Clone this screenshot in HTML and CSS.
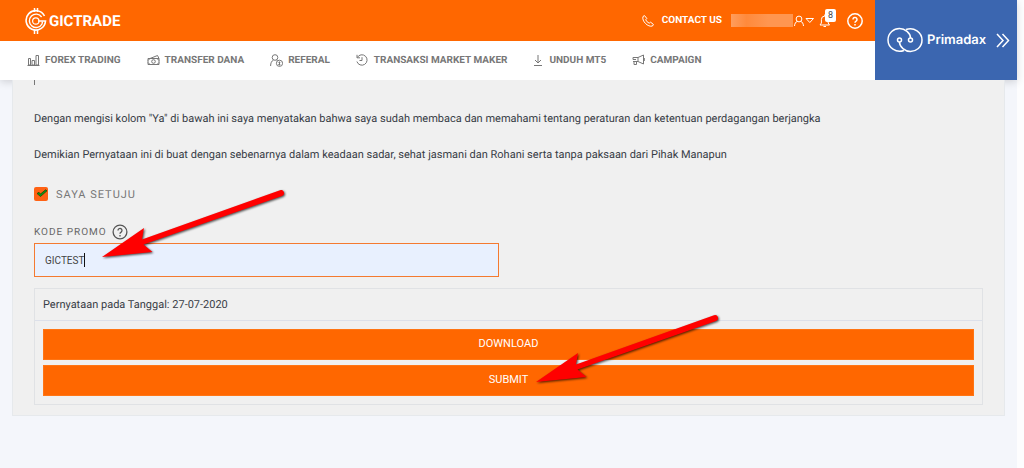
FILE: index.html
```html
<!DOCTYPE html>
<html lang="id">
<head>
  <meta charset="UTF-8">
  <meta name="viewport" content="width=device-width, initial-scale=1.0">
  <title>GICTRADE</title>
  <link rel="stylesheet" href="styles.css">
</head>
<body>
  <div class="page">
    <header class="header">
      <div class="header-main">
        <div class="topbar">
          <a href="#" class="logo">
            <svg width="22" height="28" viewBox="0 0 22 28" fill="none" stroke="#fff">
              <path d="M9.500 1v4M12.500 1v4M9.500 23v4M12.500 23v4" stroke-width="1.5"/>
              <path d="M19.500 9A9.700 9.700 0 1 0 20.500 14H13" stroke-width="1.600"/>
              <path d="M16.600 10A6.700 6.700 0 1 0 17 17L17.500 14.500" stroke-width="1.400"/>
              <circle cx="10.800" cy="14" r="3.200" stroke-width="1.200"/>
            </svg>
            <span>GICTRADE</span>
          </a>
          <div class="account">
            <a href="#" class="contact">
              <svg width="12" height="12" viewBox="0 0 12 12" fill="none" stroke="#fff">
                <path d="M1 1.500L2.500.6 4.800 3.400 3.700 4.800C4.400 6.300 5.600 7.500 7.200 8.200L8.600 7.200 11.400 9.400 10.500 11C6 12.500-.5 6 1 1.500z"/>
              </svg>
              <span>CONTACT US</span>
            </a>
            <span class="username"></span>
            <button type="button" class="icon-btn" aria-label="Akun">
              <svg width="22" height="12" viewBox="0 0 22 12" fill="none" stroke="#fff">
                <circle cx="6" cy="4" r="2.900"/>
                <path d="M1.500 11c.2-2.500 1.200-4 2.800-4.700M10.500 11c-.2-2.500-1.200-4-2.800-4.700M13 3.500h7.500l-3.700 4z"/>
              </svg>
            </button>
            <button type="button" class="icon-btn bell" aria-label="Notifikasi">
              <svg width="12" height="14" viewBox="0 0 12 14" fill="none" stroke="#fff">
                <path d="M1 11h9.500L9.200 9V5.500a3.400 3.400 0 0 0-6.800 0V9zM4.500 12.500h2.500M5.800 2V.5"/>
              </svg>
              <span class="badge">8</span>
            </button>
            <button type="button" class="icon-btn" aria-label="Bantuan">
              <svg width="16" height="16" viewBox="0 0 16 16" fill="none" stroke="#fff" stroke-width="1.500">
                <circle cx="8" cy="8" r="7.200"/>
                <path d="M6 6.500a2 2 0 1 1 3.100 1.600C8.300 8.600 8 8.900 8 9.800M8 11v1.500"/>
              </svg>
            </button>
          </div>
        </div>
        <nav class="nav">
          <a href="#">
            <svg width="13" height="12" viewBox="0 0 13 12"><path d="M1.500 4.500h2v6.500h-2zM5 6.500h2.500V11H5zM9 1.500h2.500V11H9zM.5 11.500h12"/></svg>
            <span>FOREX TRADING</span>
          </a>
          <a href="#">
            <svg width="13" height="12" viewBox="0 0 13 12"><path d="M1 4.500h11v6H1zM3 4.500l7.500-3 1.500 3M1 6.500l2-2M10 10.500l2-2M1 8.500l2 2M10 4.500l2 2"/><circle cx="6.500" cy="7.500" r="1.800"/></svg>
            <span>TRANSFER DANA</span>
          </a>
          <a href="#">
            <svg width="13" height="13" viewBox="0 0 13 13"><circle cx="5" cy="3.500" r="2.800"/><path d="M.6 12c0-3 1-5 2.900-6M6.500 6l1 .5M9.500 7.500v4M8.500 8.500h1.800M8.300 10.500h2"/><circle cx="9.500" cy="9.300" r="3.100"/></svg>
            <span>REFERAL</span>
          </a>
          <a href="#" class="wide">
            <svg width="12" height="12" viewBox="0 0 12 12"><path d="M1.300 3.500A5.200 5.200 0 1 1 .9 7.500M1 .8v3h3M6 3.200v3.300H3.500"/></svg>
            <span>TRANSAKSI MARKET MAKER</span>
          </a>
          <a href="#" class="wide">
            <svg width="10" height="12" viewBox="0 0 10 12"><path d="M5 1v8M2 6l3 3 3-3M1 11.500h8"/></svg>
            <span>UNDUH MT5</span>
          </a>
          <a href="#">
            <svg width="13" height="12" viewBox="0 0 13 12"><path d="M1 3.500h5L11.500 1v9L6 7.500H4M6 3.500v4M2 7.500v3h2.500v-3M1 3.500v2h3M1 7.500h3M12.300 4v3"/></svg>
            <span>CAMPAIGN</span>
          </a>
        </nav>
      </div>
      <a href="#" class="brand">
        <svg width="36" height="26" viewBox="0 0 36 26" fill="none" stroke="#fff" stroke-width="1.500">
          <path d="M17 23.500C9 26.500 1 20.500 1 13S7 1.500 12.500 1.500 23.500 6 23.500 11"/>
          <path d="M19 2.500C27-.5 35 5.500 35 13S29 24.500 23.500 24.500 12.500 20 12.500 15"/>
          <circle cx="12.500" cy="13" r="2"/>
          <circle cx="23.500" cy="13" r="2"/>
        </svg>
        <span class="brand-name">Primadax</span>
        <svg width="14" height="15" viewBox="0 0 14 15" fill="none" stroke="#fff" stroke-width="1.500">
          <path d="M1 1l6 6.500L1 14M6.500 1l6 6.500-6 6.500"/>
        </svg>
      </a>
    </header>

    <main class="card">
      <div class="text-tail"></div>
      <p>Dengan mengisi kolom "Ya" di bawah ini saya menyatakan bahwa saya sudah membaca dan memahami tentang peraturan dan ketentuan perdagangan berjangka</p>
      <p>Demikian Pernyataan ini di buat dengan sebenarnya dalam keadaan sadar, sehat jasmani dan Rohani serta tanpa paksaan dari Pihak Manapun</p>
      <form>
        <label class="agree" for="agree">
          <span class="tick">
            <input type="checkbox" id="agree" checked>
            <svg width="14" height="14" viewBox="0 0 14 14" fill="#0b9a14" stroke="#173c08" stroke-width=".7"><path d="M3 6.500l2-1.200 1.500 1.700 5-4.200 1.500 1L6.500 9.500z"/></svg>
          </span>
          <span>SAYA SETUJU</span>
        </label>
        <div class="promo-label">
          <label for="promo">KODE PROMO</label>
          <svg width="16" height="16" viewBox="0 0 16 16" fill="none" stroke="#555" stroke-width="1.300">
            <circle cx="8" cy="8" r="6.900"/>
            <path d="M6 6.500a2 2 0 1 1 3.100 1.600C8.300 8.600 8 8.900 8 9.800M8 11v1.500"/>
          </svg>
        </div>
        <div class="promo-field">
          <input type="text" id="promo" class="promo" value="GICTEST">
          <span class="caret"></span>
        </div>
        <div class="statement">
          <div class="date">Pernyataan pada Tanggal: 27-07-2020</div>
          <div class="actions">
            <button type="button">DOWNLOAD</button>
            <button type="submit">SUBMIT</button>
          </div>
        </div>
      </form>
    </main>

    <!-- pointers to the promo field and the submit button -->
    <svg class="arrows" width="740" height="420" viewBox="0 0 740 420">
      <defs>
        <g id="arrow">
          <path d="M102 257L144 228l-2 11.500L280 190.200a3 3 0 0 1 2 5.700L143.500 244.500l9 7.500z"/>
        </g>
      </defs>
      <use href="#arrow"/>
      <use href="#arrow" x="434" y="125"/>
    </svg>
  </div>
</body>
</html>
```
FILE: styles.css
```css
* {
  box-sizing: border-box;
}
body {
  margin: 0;
  padding-right: 7px;
  background: #fdfdfe;
  font-family: Roboto, Arial, sans-serif;
  font-size: 11px;
  text-rendering: geometricPrecision;
  color: #383d46;
}
a {
  color: inherit;
  text-decoration: none;
}
button {
  font-family: inherit;
  cursor: pointer;
}
.page {
  position: relative;
  min-height: 100vh;
  background: #f4f6fb;
}
.header {
  display: flex;
  height: 80px;
  background: #fff;
  box-shadow: 0 2px 8px rgba(0, 0, 0, 0.15);
}
.header-main {
  flex: 1;
}
.topbar {
  display: flex;
  align-items: center;
  justify-content: space-between;
  height: 41px;
  padding: 0 12px 0 25px;
  background: #ff6700;
  color: #fff;
}
.logo {
  display: flex;
  align-items: center;
  gap: 2px;
  font-size: 15px;
  font-weight: bold;
}
.account {
  display: flex;
  align-items: center;
}
.contact {
  display: flex;
  align-items: center;
  gap: 8px;
  font-size: 10px;
  font-weight: bold;
}
.username {
  width: 62px;
  height: 13px;
  margin-left: 9px;
  background: linear-gradient(90deg, #ff9d5c, #ff8a3c 25%, #ff9650 60%, #ff9650);
}
.icon-btn {
  display: flex;
  padding: 0;
  border: 0;
  background: none;
}
.bell {
  position: relative;
  margin: 0 16px 0 4px;
}
.badge {
  position: absolute;
  left: 6px;
  top: -5px;
  width: 11px;
  border-radius: 2px;
  background: #fff;
  color: #444;
  font-size: 9px;
  line-height: 13px;
  text-align: center;
}
.nav {
  display: flex;
  align-items: center;
  gap: 26px;
  height: 38px;
  padding-left: 27px;
  color: #777;
  font-size: 10px;
  font-weight: bold;
}
.nav a {
  display: flex;
  align-items: center;
  gap: 5px;
}
.nav .wide {
  gap: 6px;
}
.nav svg {
  fill: none;
  stroke: #777;
  stroke-width: 1;
}
.brand {
  display: flex;
  align-items: center;
  width: 142px;
  padding-left: 12px;
  background: #3b66b0;
  color: #fff;
}
.brand-name {
  margin: 0 10px 0 4px;
  font-family: Inter, sans-serif;
  font-size: 13px;
  font-weight: 600;
}
.card {
  margin: 0 12px;
  padding: 0 21px 10px;
  border: 1px solid #e6e9ec;
  border-top: 0;
  background: #f0f0f0;
}
.text-tail {
  width: 2px;
  height: 5px;
  margin-bottom: 26px;
  border-left: 1px solid #777;
}
p {
  margin: 0 0 20px;
  line-height: 16px;
}
.agree {
  display: flex;
  align-items: center;
  gap: 8px;
  height: 14px;
  margin-top: 24px;
  color: #777;
  font-size: 11px;
  letter-spacing: 1px;
}
.tick {
  display: grid;
}
.tick input,
.tick svg {
  grid-area: 1 / 1;
}
.tick svg {
  pointer-events: none;
}
.tick input {
  width: 14px;
  height: 14px;
  margin: 0;
  appearance: none;
  border-radius: 2px;
  background: #ff6214;
}
.promo-label {
  display: flex;
  align-items: center;
  gap: 5px;
  margin: 23px 0 3px;
  color: #666;
  font-size: 10px;
  letter-spacing: 1px;
}
.promo-field {
  position: relative;
  width: 49%;
}
.promo {
  display: block;
  width: 100%;
  height: 34px;
  padding: 0 10px;
  border: 1px solid #f47a30;
  border-radius: 0;
  outline: 0;
  background: #e8f0fe;
  color: #444;
  font-family: inherit;
  font-size: 10px;
}
.caret {
  position: absolute;
  left: 50px;
  top: 10px;
  width: 1px;
  height: 14px;
  background: #111;
}
.statement {
  margin-top: 11px;
  border: 1px solid #e0e2e5;
}
.date {
  padding: 0 8px;
  border-bottom: 1px solid #dce0ea;
  line-height: 31px;
}
.actions {
  display: grid;
  gap: 5px;
  padding: 8px;
}
.actions button {
  height: 31px;
  padding-bottom: 4px;
  border: 1px solid #ff7514;
  background: #ff6700;
  color: #fff;
  font-size: 11px;
}
.arrows {
  position: absolute;
  left: 0;
  top: 0;
  fill: #f00;
  filter: drop-shadow(1px 1px 1px rgba(0, 0, 0, 0.7));
  pointer-events: none;
}
```
